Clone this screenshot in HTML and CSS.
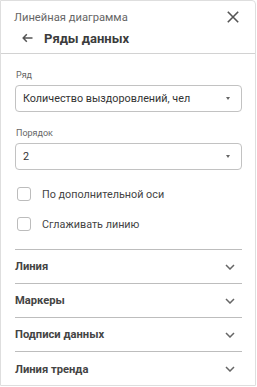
FILE: index.html
```html
<!DOCTYPE html>
<html>
<head>
    <meta charset="UTF-8">
    <meta name="viewport" content="width=device-width, initial-scale=1.0">
    <title>Ряды данных</title>
    <link rel="stylesheet" href="styles.css">
</head>
<body>
    <div class="panel">
        <!-- Header -->
        <div class="header">
            <div class="header-top">
                <span class="subtitle">Линейная диаграмма</span>
                <svg width="12" height="12" viewBox="0 0 12 12"><path d="M0.8 0.8L11.2 11.2M11.2 0.8L0.8 11.2" stroke="#555" stroke-width="1.6"/></svg>
            </div>
            <div class="header-title">
                <svg width="11" height="10" viewBox="0 0 11 10"><path d="M10.5 5H1.2M4.8 1.3L1.2 5L4.8 8.7" stroke="#555" stroke-width="1.5" fill="none"/></svg>
                <span>Ряды данных</span>
            </div>
        </div>

        <!-- Fields -->
        <div class="body">
            <div class="field-label">Ряд</div>
            <div class="select">
                <span>Количество выздоровлений, чел</span>
                <span class="caret"></span>
            </div>
            <div class="field-label">Порядок</div>
            <div class="select">
                <span>2</span>
                <span class="caret"></span>
            </div>

            <div class="checks">
                <div class="check"><span class="box"></span>По дополнительной оси</div>
                <div class="check"><span class="box"></span>Сглаживать линию</div>
            </div>

            <div class="sections">
                <div class="section">Линия<svg width="10" height="6" viewBox="0 0 10 6"><path d="M1 1L5 5L9 1" stroke="#666" stroke-width="1.5" fill="none"/></svg></div>
                <div class="section">Маркеры<svg width="10" height="6" viewBox="0 0 10 6"><path d="M1 1L5 5L9 1" stroke="#666" stroke-width="1.5" fill="none"/></svg></div>
                <div class="section">Подписи данных<svg width="10" height="6" viewBox="0 0 10 6"><path d="M1 1L5 5L9 1" stroke="#666" stroke-width="1.5" fill="none"/></svg></div>
                <div class="section">Линия тренда<svg width="10" height="6" viewBox="0 0 10 6"><path d="M1 1L5 5L9 1" stroke="#666" stroke-width="1.5" fill="none"/></svg></div>
            </div>
        </div>
    </div>
</body>
</html>
```
FILE: styles.css
```css
* { box-sizing: border-box; margin: 0; padding: 0; }
body { background: #fff; font-family: Roboto, "Liberation Sans", sans-serif; font-size: 10.8px; color: #333; }

/* Panel */
.panel {
    width: 256px; height: 386px; border: 1px solid #dedede; border-radius: 0 4px 0 0;
    background: #fff; overflow: hidden;
}

/* Header */
.header { height: 53px; border-bottom: 1px solid #d2d2d2; padding: 7px 0 0 13px; }
.header-top { display: flex; justify-content: space-between; align-items: center; height: 18px; padding-right: 16px; }
.subtitle { font-size: 11.2px; color: #666; }
.header-title { display: flex; align-items: center; height: 22px; margin-top: 1px; padding-left: 8px; }
.header-title span { font-size: 13px; font-weight: bold; color: #3c3c3c; margin-left: 11px; }

/* Body */
.body { padding: 0 13px 0 14px; }
.field-label { font-size: 9px; line-height: 15px; color: #666; margin: 14px 0 2px 1px; }
.select {
    display: flex; justify-content: space-between; align-items: center;
    height: 27px; border: 1px solid #c2c2c2; border-radius: 4px;
    padding: 0 11px 0 7px; font-size: 10.8px; color: #333;
}
.caret { width: 0; height: 0; border-left: 2.5px solid transparent; border-right: 2.5px solid transparent; border-top: 3px solid #666; }

/* Checkboxes */
.checks { margin-top: 9px; margin-bottom: 10px; }
.check { display: flex; align-items: center; height: 30px; font-size: 10.8px; color: #444; padding-left: 2px; }
.box { width: 14px; height: 14px; border: 1px solid #bcbcbc; border-radius: 3px; margin-right: 11px; }

/* Collapsible sections */
.sections { border-top: 1px solid #bdbdbd; }
.section {
    display: flex; justify-content: space-between; align-items: center;
    height: 34px; font-size: 11.2px; font-weight: bold; color: #444;
    border-bottom: 1px solid #bdbdbd; padding-right: 7px;
}
.section:last-child { border-bottom: none; }
```
